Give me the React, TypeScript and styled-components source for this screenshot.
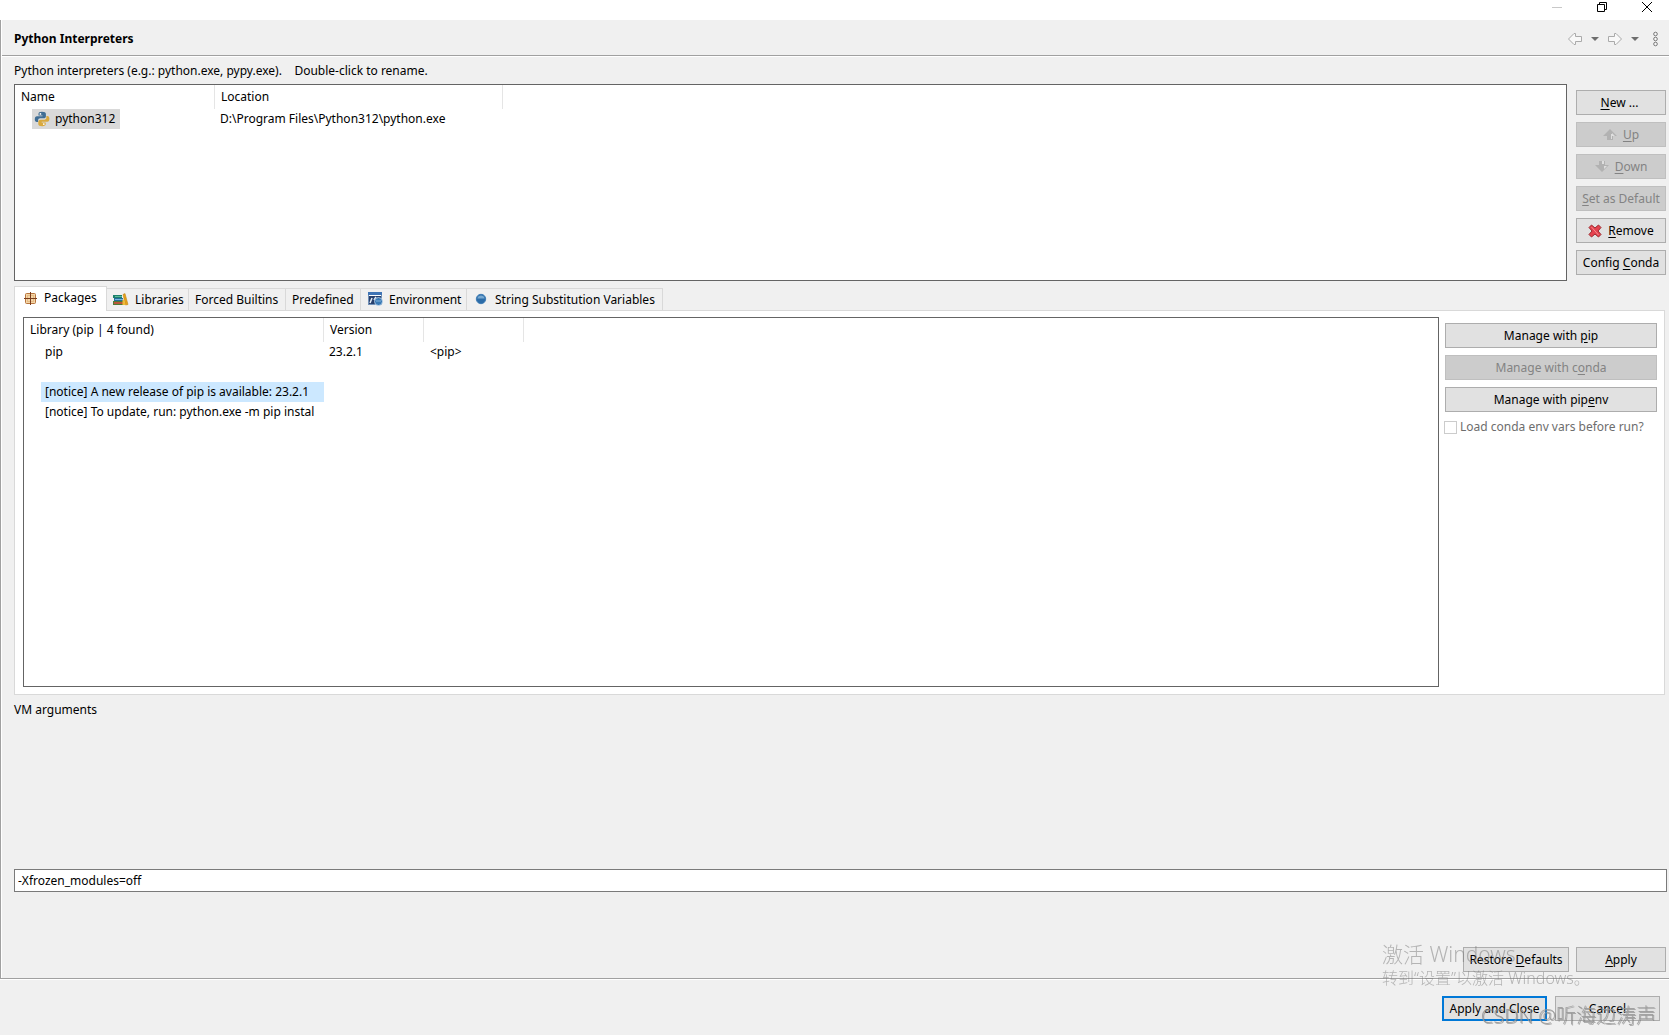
import React, { useState } from "react";
import styled, { createGlobalStyle, css } from "styled-components";

const GlobalStyle = createGlobalStyle`
  *, *::before, *::after { box-sizing: border-box; }
  body {
    margin: 0;
    background: #f0f0f0;
    color: #000;
    font: 12px/20px "Noto Sans", "Noto Sans CJK SC", sans-serif;
  }
  button, input { font: inherit; color: inherit; margin: 0; }
`;

const Window = styled.div`
  display: flex;
  flex-direction: column;
  min-height: 100vh;
`;

const TitleBar = styled.div`
  display: flex;
  justify-content: flex-end;
  height: 20px;
  background: #fff;
`;

const WindowButton = styled.button`
  display: flex;
  justify-content: center;
  align-items: flex-start;
  width: 45px;
  height: 20px;
  padding: 2px 0 0;
  border: 0;
  background: none;
`;

const Page = styled.main`
  flex: 1;
  display: flex;
  flex-direction: column;
  border-left: 1px solid #a0a0a0;
  border-bottom: 1px solid #a0a0a0;
  box-shadow: inset 1px 0 #fff, 0 1px #fff;
`;

const PageHeader = styled.header`
  display: flex;
  align-items: center;
  justify-content: space-between;
  height: 36px;
  margin-left: 1px;
  padding: 2px 4px 0 12px;
  border-bottom: 1px solid #a0a0a0;
  box-shadow: 0 1px #fff;
`;

const PageTitle = styled.h1`
  margin: 0;
  font-size: 12px;
  line-height: 20px;
  font-weight: 700;
`;

const ToolBar = styled.div`
  display: flex;
  align-items: center;
`;

const ToolButton = styled.button`
  display: flex;
  align-items: center;
  justify-content: center;
  width: 20px;
  height: 20px;
  padding: 0;
  border: 0;
  background: none;
`;

const Body = styled.div`
  flex: 1;
  display: flex;
  flex-direction: column;
  padding: 5px 2px 6px 13px;
`;

const Hint = styled.p`
  margin: 0 0 3px;
  white-space: pre;
`;

const InterpreterArea = styled.section`
  display: flex;
  gap: 9px;
  padding-right: 1px;
`;

const TableFrame = styled.div`
  flex: 1;
  min-width: 0;
  border: 1px solid #646464;
  background: #fff;
`;

const Table = styled.table`
  table-layout: fixed;
  border-collapse: separate;
  border-spacing: 0;
  width: 0;
`;

const Column = styled.col<{ $width: number }>`
  width: ${(p) => p.$width}px;
`;

const HeadCell = styled.th`
  height: 24px;
  padding: 0 0 0 6px;
  border-right: 1px solid #e5e5e5;
  font-weight: 400;
  text-align: left;
  white-space: nowrap;
`;

const Cell = styled.td<{ $indent?: number }>`
  height: 20px;
  padding: 0 0 0 ${(p) => p.$indent ?? 5}px;
  white-space: nowrap;
  overflow: hidden;
`;

const InterpreterName = styled.span`
  display: inline-flex;
  align-items: center;
  gap: 5px;
  min-width: 88px;
  height: 20px;
  padding: 0 2px;
  background: #d9d9d9;
  vertical-align: top;
`;

const LibraryName = styled.span<{ $selected?: boolean }>`
  display: block;
  height: 20px;
  padding-left: 4px;
  overflow: hidden;
  ${(p) => p.$selected && css`background: #cce8ff;`}
`;

const ButtonColumn = styled.div<{ $width: number }>`
  display: flex;
  flex-direction: column;
  gap: 7px;
  width: ${(p) => p.$width}px;
  padding: 6px 0;
`;

const PushButton = styled.button<{ $width?: number; $primary?: boolean }>`
  display: flex;
  align-items: center;
  justify-content: center;
  gap: 6px;
  ${(p) => p.$width && css`width: ${p.$width}px;`}
  height: 25px;
  padding: 0;
  border: ${(p) => (p.$primary ? "2px solid #0078d7" : "1px solid #adadad")};
  background: #e1e1e1;
  line-height: 20px;
  white-space: pre;

  &:disabled {
    border-color: #bfbfbf;
    background: #cccccc;
    color: #838383;
  }
`;

const Mnemonic = styled.u`
  text-underline-offset: 2px;
`;

const TabStrip = styled.div`
  display: flex;
  align-items: flex-end;
  height: 24px;
  margin-top: 5px;
`;

const Tab = styled.button<{ $width: number; $active?: boolean }>`
  display: flex;
  align-items: center;
  gap: 6px;
  width: ${(p) => p.$width}px;
  height: 22px;
  padding: 0 0 0 6px;
  border: solid #d9d9d9;
  border-width: 1px 1px 0 0;
  background: #f0f0f0;
  white-space: nowrap;

  ${(p) =>
    p.$active &&
    css`
      z-index: 1;
      height: 25px;
      margin-bottom: -1px;
      padding: 0 0 3px 7px;
      border-left-width: 1px;
      background: #fff;
    `}
`;

const TabPanel = styled.section`
  flex: 1;
  display: flex;
  gap: 6px;
  margin-right: 2px;
  padding: 6px 7px 7px 8px;
  border: 1px solid #d9d9d9;
  background: #fff;
`;

const CheckRow = styled.div`
  display: flex;
  align-items: center;
  gap: 3px;
  height: 20px;
  margin: -2px 0 0 -1px;
  color: #6d6d6d;
  white-space: nowrap;
`;

const CheckBox = styled.input`
  appearance: none;
  width: 13px;
  height: 13px;
  border: 1px solid #cccccc;
  background: #fff;
`;

const VmSection = styled.section`
  display: flex;
  flex-direction: column;
  gap: 149px;
  padding: 5px 0 55px;
`;

const VmInput = styled.input`
  width: 100%;
  height: 23px;
  padding: 0 3px;
  border: 1px solid #7a7a7a;
  background: #fff;
`;

const Actions = styled.div<{ $right: number; $gap: number }>`
  display: flex;
  justify-content: flex-end;
  gap: ${(p) => p.$gap}px;
  padding-right: ${(p) => p.$right}px;
`;

const Footer = styled.footer`
  padding: 17px 0 14px;
`;

const ActivationNotice = styled.div`
  position: fixed;
  right: 85px;
  bottom: 46px;
  width: 202px;
  color: rgba(120, 120, 120, 0.5);
  font-weight: 300;
  font-size: 16px;
  line-height: 22px;
  white-space: nowrap;
  pointer-events: none;
`;

const ActivationTitle = styled.div`
  font-size: 21px;
  line-height: 26px;
`;

const Credit = styled.div`
  position: fixed;
  right: 13px;
  bottom: 6px;
  color: rgba(150, 150, 150, 0.85);
  font-size: 20px;
  line-height: 26px;
  font-weight: 300;
  text-shadow: 1px 1px 0 rgba(110, 110, 110, 0.5);
  white-space: nowrap;
  pointer-events: none;
`;

const PythonIcon = () => (
  <svg width="16" height="16" viewBox="0 0 16 16" aria-hidden="true">
    <path fill="#3f6d94" d="M8 .8C5.400.8 4.500 1.600 4.500 3v1.500h4v.7H3C1.500 5.200.8 6.300.8 8.200c0 1.700.7 2.800 2 2.800h1.300V9.400c0-1.300.9-2.100 2.100-2.100h3.600c1.100 0 2.100-.8 2.100-1.900V3c0-1.500-1.300-2.200-3.900-2.200z" />
    <path fill="#d9a93e" d="M8.200 15.200c2.600 0 3.500-.8 3.500-2.200v-1.500h-4v-.7h5.500c1.500 0 2.200-1.100 2.200-3 0-1.700-.7-2.800-2-2.800h-1v1.600c0 1.300-.9 2.100-2.100 2.100H6.600c-1.100 0-2.300.8-2.300 1.900V13c0 1.500 1.300 2.200 3.900 2.200z" />
    <circle cx="6.400" cy="2.900" r=".9" fill="#fff" />
    <circle cx="9.800" cy="13.100" r=".9" fill="#fff" />
  </svg>
);

const PackageIcon = () => (
  <svg width="16" height="16" viewBox="0 0 16 16" aria-hidden="true">
    <rect x="3.500" y="3.500" width="10" height="10" rx="1" fill="#f3d6a8" stroke="#b8743c" />
    <rect x="5.500" y="5.500" width="6" height="6" fill="none" stroke="#e6ba84" />
    <path d="M8.500 2v13M2 8.500h13" stroke="#7a3c1c" />
  </svg>
);

const LibrariesIcon = () => (
  <svg width="16" height="16" viewBox="0 0 16 16" aria-hidden="true">
    <path fill="#1b7f6b" d="M0 3h9v3H0z" />
    <path fill="#5fb99c" d="M2 4h7v1H2z" />
    <path fill="#226c9c" d="M1 6h9v3H1z" />
    <path fill="#75b7da" d="M2 7h8v1H2z" />
    <path fill="#4f7a35" d="M0 9h10v4H0z" />
    <path fill="#b9563a" d="M1 10h9v2H1z" />
    <path fill="#e3a21a" stroke="#b87908" strokeWidth=".5" d="M10 2.500l2-1 3 11-2.500.5z" />
    <path fill="#f0bb36" d="M9.500 8l1.500-.5L12.500 13h-3z" />
  </svg>
);

const EnvironmentIcon = () => (
  <svg width="16" height="16" viewBox="0 0 16 16" aria-hidden="true">
    <rect x="1.500" y=".5" width="13" height="12" fill="#fff" stroke="#7392b8" />
    <path fill="#3f74b5" d="M1 0h14v3H1z" />
    <path fill="#263f6c" d="M2 4h12v8H2z" />
    <path d="M3 11l2-5M7 8l2-3" stroke="#e5edf6" strokeWidth="1.500" fill="none" />
    <circle cx="11.500" cy="9.500" r="4" fill="#3979b5" stroke="#d4e2f0" strokeWidth=".7" />
    <path d="M9 9h5" stroke="#85b4da" />
  </svg>
);

const VariableIcon = () => (
  <svg width="16" height="16" viewBox="0 0 16 16" aria-hidden="true">
    <circle cx="8" cy="7" r="4.700" fill="#2c6ca8" stroke="#3d7cb5" />
    <path fill="#78a9d1" d="M4.300 6.500a3.800 3.800 0 017.400 0z" />
  </svg>
);

const RemoveIcon = () => (
  <svg width="14" height="14" viewBox="0 0 14 14" aria-hidden="true">
    <path fill="#e5424f" stroke="#9d2a2e" d="M3.500 1L7 4l3.500-3L13 3.500 10 7l3 3.500-2.500 2.500L7 10l-3.500 3L1 10.500 4 7 1 3.500z" strokeLinejoin="round" />
    <path d="M3.500 3l7 8" stroke="#f48b8e" />
  </svg>
);

const MoveIcon = ({ down }: { down?: boolean }) => (
  <svg width="14" height="12" viewBox="0 0 14 12" aria-hidden="true">
    {down ? (
      <>
        <path fill="#b2b2b2" d="M4 0h6v4h4l-7 7-7-7h4z" />
        <path fill="#dedede" d="M7 0h2v3H7zM9 5h3l-3 3z" />
      </>
    ) : (
      <>
        <path fill="#b2b2b2" d="M7 0l7 7h-4v4H4V7H0z" />
        <path fill="#dedede" d="M9 4l3 3h-3v3H8V5h1z" />
      </>
    )}
  </svg>
);

const ArrowIcon = ({ right }: { right?: boolean }) => (
  <svg width="16" height="14" viewBox="0 0 16 14" aria-hidden="true">
    <path
      fill="#f8f8f8"
      stroke="#aaa"
      strokeLinejoin="round"
      d={right ? "M1.500 4.500h6v-3h1.500l5.500 5.500-5.500 5.500H7.500v-3h-6z" : "M14.500 4.500h-6v-3H7L1.500 7 7 12.500h1.500v-3h6z"}
    />
  </svg>
);

const CaretIcon = () => (
  <svg width="8" height="4" viewBox="0 0 8 4" aria-hidden="true">
    <path fill="#6e6e6e" d="M0 0h8L4 4z" />
  </svg>
);

const MenuDotsIcon = () => (
  <svg width="7" height="16" viewBox="0 0 7 16" aria-hidden="true" fill="#f8f8f8" stroke="#777">
    <circle cx="3.500" cy="3" r="1.800" />
    <circle cx="3.500" cy="8" r="1.800" />
    <circle cx="3.500" cy="13" r="1.800" />
  </svg>
);

const tabs = [
  { name: "Packages", width: 93, icon: <PackageIcon /> },
  { name: "Libraries", width: 82, icon: <LibrariesIcon /> },
  { name: "Forced Builtins", width: 97 },
  { name: "Predefined", width: 75 },
  { name: "Environment", width: 106, icon: <EnvironmentIcon /> },
  { name: "String Substitution Variables", width: 196, icon: <VariableIcon /> },
];

const libraries = [
  { name: "pip", version: "23.2.1", source: "<pip>" },
  { name: "", version: "", source: "" },
  { name: "[notice] A new release of pip is available: 23.2.1", version: "", source: "", selected: true },
  { name: "[notice] To update, run: python.exe -m pip instal", version: "", source: "" },
];

export default function App() {
  const [vmArgs, setVmArgs] = useState("-Xfrozen_modules=off");

  return (
    <Window>
      <GlobalStyle />
      <TitleBar>
        <WindowButton aria-label="Minimize">
          <svg width="10" height="10"><path d="M0 5.500h10" stroke="#c8c8c8" /></svg>
        </WindowButton>
        <WindowButton aria-label="Restore">
          <svg width="10" height="10" fill="none" stroke="#000"><path d="M.5 2.500h7v7h-7zM2.500 2.500v-2h7v7h-2" /></svg>
        </WindowButton>
        <WindowButton aria-label="Close">
          <svg width="10" height="10"><path d="M0 0l10 10M10 0L0 10" stroke="#000" /></svg>
        </WindowButton>
      </TitleBar>

      <Page>
        <PageHeader>
          <PageTitle>Python Interpreters</PageTitle>
          <ToolBar>
            <ToolButton aria-label="Back"><ArrowIcon /></ToolButton>
            <ToolButton aria-label="Back history"><CaretIcon /></ToolButton>
            <ToolButton aria-label="Forward"><ArrowIcon right /></ToolButton>
            <ToolButton aria-label="Forward history"><CaretIcon /></ToolButton>
            <ToolButton aria-label="Menu"><MenuDotsIcon /></ToolButton>
          </ToolBar>
        </PageHeader>

        <Body>
          <Hint>{"Python interpreters (e.g.: python.exe, pypy.exe).    Double-click to rename."}</Hint>
          <InterpreterArea>
            <TableFrame>
              <Table>
                <colgroup><Column $width={200} /><Column $width={288} /></colgroup>
                <thead><tr><HeadCell>Name</HeadCell><HeadCell>Location</HeadCell></tr></thead>
                <tbody>
                  <tr>
                    <Cell $indent={17}><InterpreterName><PythonIcon />python312</InterpreterName></Cell>
                    <Cell>D:\Program Files\Python312\python.exe</Cell>
                  </tr>
                </tbody>
              </Table>
            </TableFrame>
            <ButtonColumn $width={90}>
              <PushButton><span><Mnemonic>N</Mnemonic>ew ... </span></PushButton>
              <PushButton disabled><MoveIcon /><span><Mnemonic>U</Mnemonic>p</span></PushButton>
              <PushButton disabled><MoveIcon down /><span><Mnemonic>D</Mnemonic>own</span></PushButton>
              <PushButton disabled><span><Mnemonic>S</Mnemonic>et as Default</span></PushButton>
              <PushButton><RemoveIcon /><span><Mnemonic>R</Mnemonic>emove</span></PushButton>
              <PushButton><span>Config <Mnemonic>C</Mnemonic>onda</span></PushButton>
            </ButtonColumn>
          </InterpreterArea>

          <TabStrip role="tablist">
            {tabs.map((t, i) => (
              <Tab key={t.name} role="tab" aria-selected={i === 0} $width={t.width} $active={i === 0}>
                {t.icon}
                <span>{t.name}</span>
              </Tab>
            ))}
          </TabStrip>
          <TabPanel role="tabpanel" aria-label="Packages">
            <TableFrame>
              <Table>
                <colgroup><Column $width={300} /><Column $width={100} /><Column $width={100} /></colgroup>
                <thead><tr><HeadCell>Library (pip | 4 found)</HeadCell><HeadCell>Version</HeadCell><HeadCell /></tr></thead>
                <tbody>
                  {libraries.map((l, i) => (
                    <tr key={i}>
                      <Cell $indent={17}><LibraryName $selected={l.selected}>{l.name}</LibraryName></Cell>
                      <Cell>{l.version}</Cell>
                      <Cell $indent={6}>{l.source}</Cell>
                    </tr>
                  ))}
                </tbody>
              </Table>
            </TableFrame>
            <ButtonColumn $width={212}>
              <PushButton><span>Manage with <Mnemonic>p</Mnemonic>ip</span></PushButton>
              <PushButton disabled><span>Manage with c<Mnemonic>o</Mnemonic>nda</span></PushButton>
              <PushButton><span>Manage with pip<Mnemonic>e</Mnemonic>nv</span></PushButton>
              <CheckRow>
                <CheckBox type="checkbox" id="conda-env" disabled />
                <label htmlFor="conda-env">Load conda env vars before run?</label>
              </CheckRow>
            </ButtonColumn>
          </TabPanel>

          <VmSection>
            <label htmlFor="vm-args">VM arguments</label>
            <VmInput id="vm-args" value={vmArgs} onChange={(e) => setVmArgs(e.target.value)} />
          </VmSection>
          <Actions $right={1} $gap={7}>
            <PushButton $width={106}><span>Restore <Mnemonic>D</Mnemonic>efaults</span></PushButton>
            <PushButton $width={90}><span><Mnemonic>A</Mnemonic>pply</span></PushButton>
          </Actions>
        </Body>
      </Page>

      <Footer>
        <Actions $right={9} $gap={8}>
          <PushButton $width={105} $primary>Apply and Close</PushButton>
          <PushButton $width={105}>Cancel</PushButton>
        </Actions>
      </Footer>

      <ActivationNotice>
        <ActivationTitle>激活 Windows</ActivationTitle>
        转到“设置”以激活 Windows。
      </ActivationNotice>
      <Credit>CSDN @听海边涛声</Credit>
    </Window>
  );
}
